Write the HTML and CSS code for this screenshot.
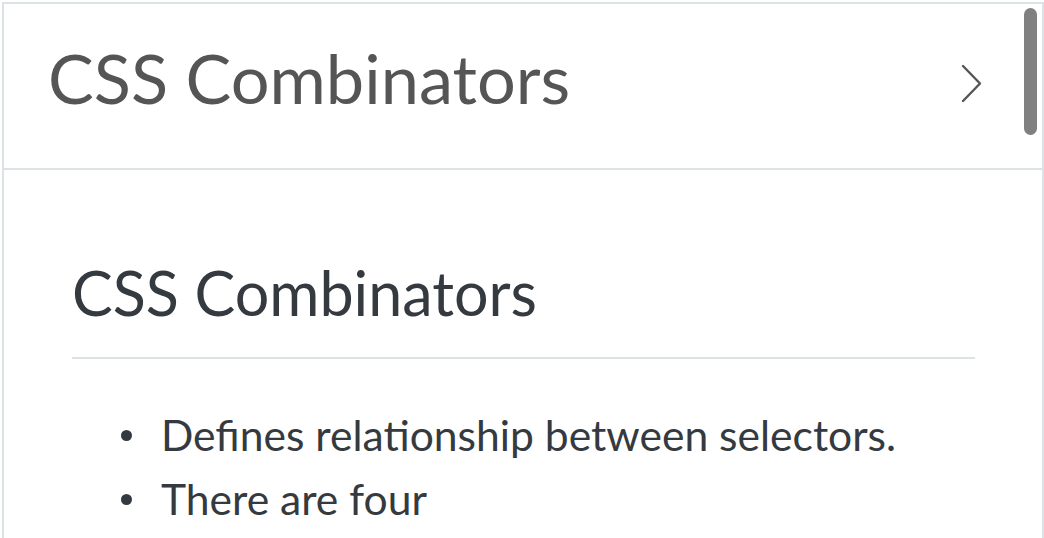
FILE: index.html
```html
<!DOCTYPE html>
<html>
<head>
<meta charset="utf-8">
<link rel="stylesheet" href="styles.css">
</head>
<body>
<div class="frame">
  <header class="topbar">
    <h1 class="topbar-title">CSS Combinators</h1>
    <svg class="chevron" width="23" height="41" viewBox="0 0 23 41"><path d="M3 3 L20 20.5 L3 38" fill="none" stroke="#555" stroke-width="2.4" stroke-linecap="round" stroke-linejoin="round"/></svg>
    <div class="scrollthumb"></div>
  </header>
  <main class="content">
    <h2 class="section-title">CSS Combinators</h2>
    <ul class="points">
      <li>Defines relationship between selectors.</li>
      <li>There are four</li>
    </ul>
  </main>
</div>
</body>
</html>
```
FILE: styles.css
```css
html, body {
  margin: 0;
  padding: 0;
  background: #fff;
  overflow: hidden;
}
body {
  font-family: Lato, "Open Sans", sans-serif;
}
.frame {
  margin: 2px 0 0 2px;
  width: 1042px;
  box-sizing: border-box;
  border: 2px solid #dde2e5;
  height: 600px;
}
.topbar {
  position: relative;
  height: 164px;
  border-bottom: 2px solid #dde2e5;
  display: flex;
  align-items: center;
  padding: 0 59px 0 44px;
}
.topbar-title {
  margin: 0 0 15px;
  flex: 1;
  font-weight: 400;
  font-size: 68.5px;
  color: #555;
  line-height: 1;
}
.chevron {
  display: block;
  margin-bottom: 5px;
}
.scrollthumb {
  position: absolute;
  right: 5px;
  top: 4px;
  width: 13px;
  height: 127px;
  border-radius: 7px;
  background: #808080;
}
.content {
  padding: 0 67px 0 68px;
}
.section-title {
  margin: 0;
  padding-top: 86px;
  padding-bottom: 28px;
  font-weight: 400;
  font-size: 61px;
  line-height: 1.2;
  color: #343a40;
  border-bottom: 2px solid #dde2e5;
}
.points {
  list-style: none;
  margin: 44px 0 0;
  padding-left: 49px;
  font-size: 42.6px;
  line-height: 64px;
  color: #343a40;
}
.points li::before {
  content: "";
  display: inline-block;
  width: 11px;
  height: 11px;
  border-radius: 50%;
  background: #343a40;
  margin-right: 29px;
  vertical-align: 10px;
}
```
